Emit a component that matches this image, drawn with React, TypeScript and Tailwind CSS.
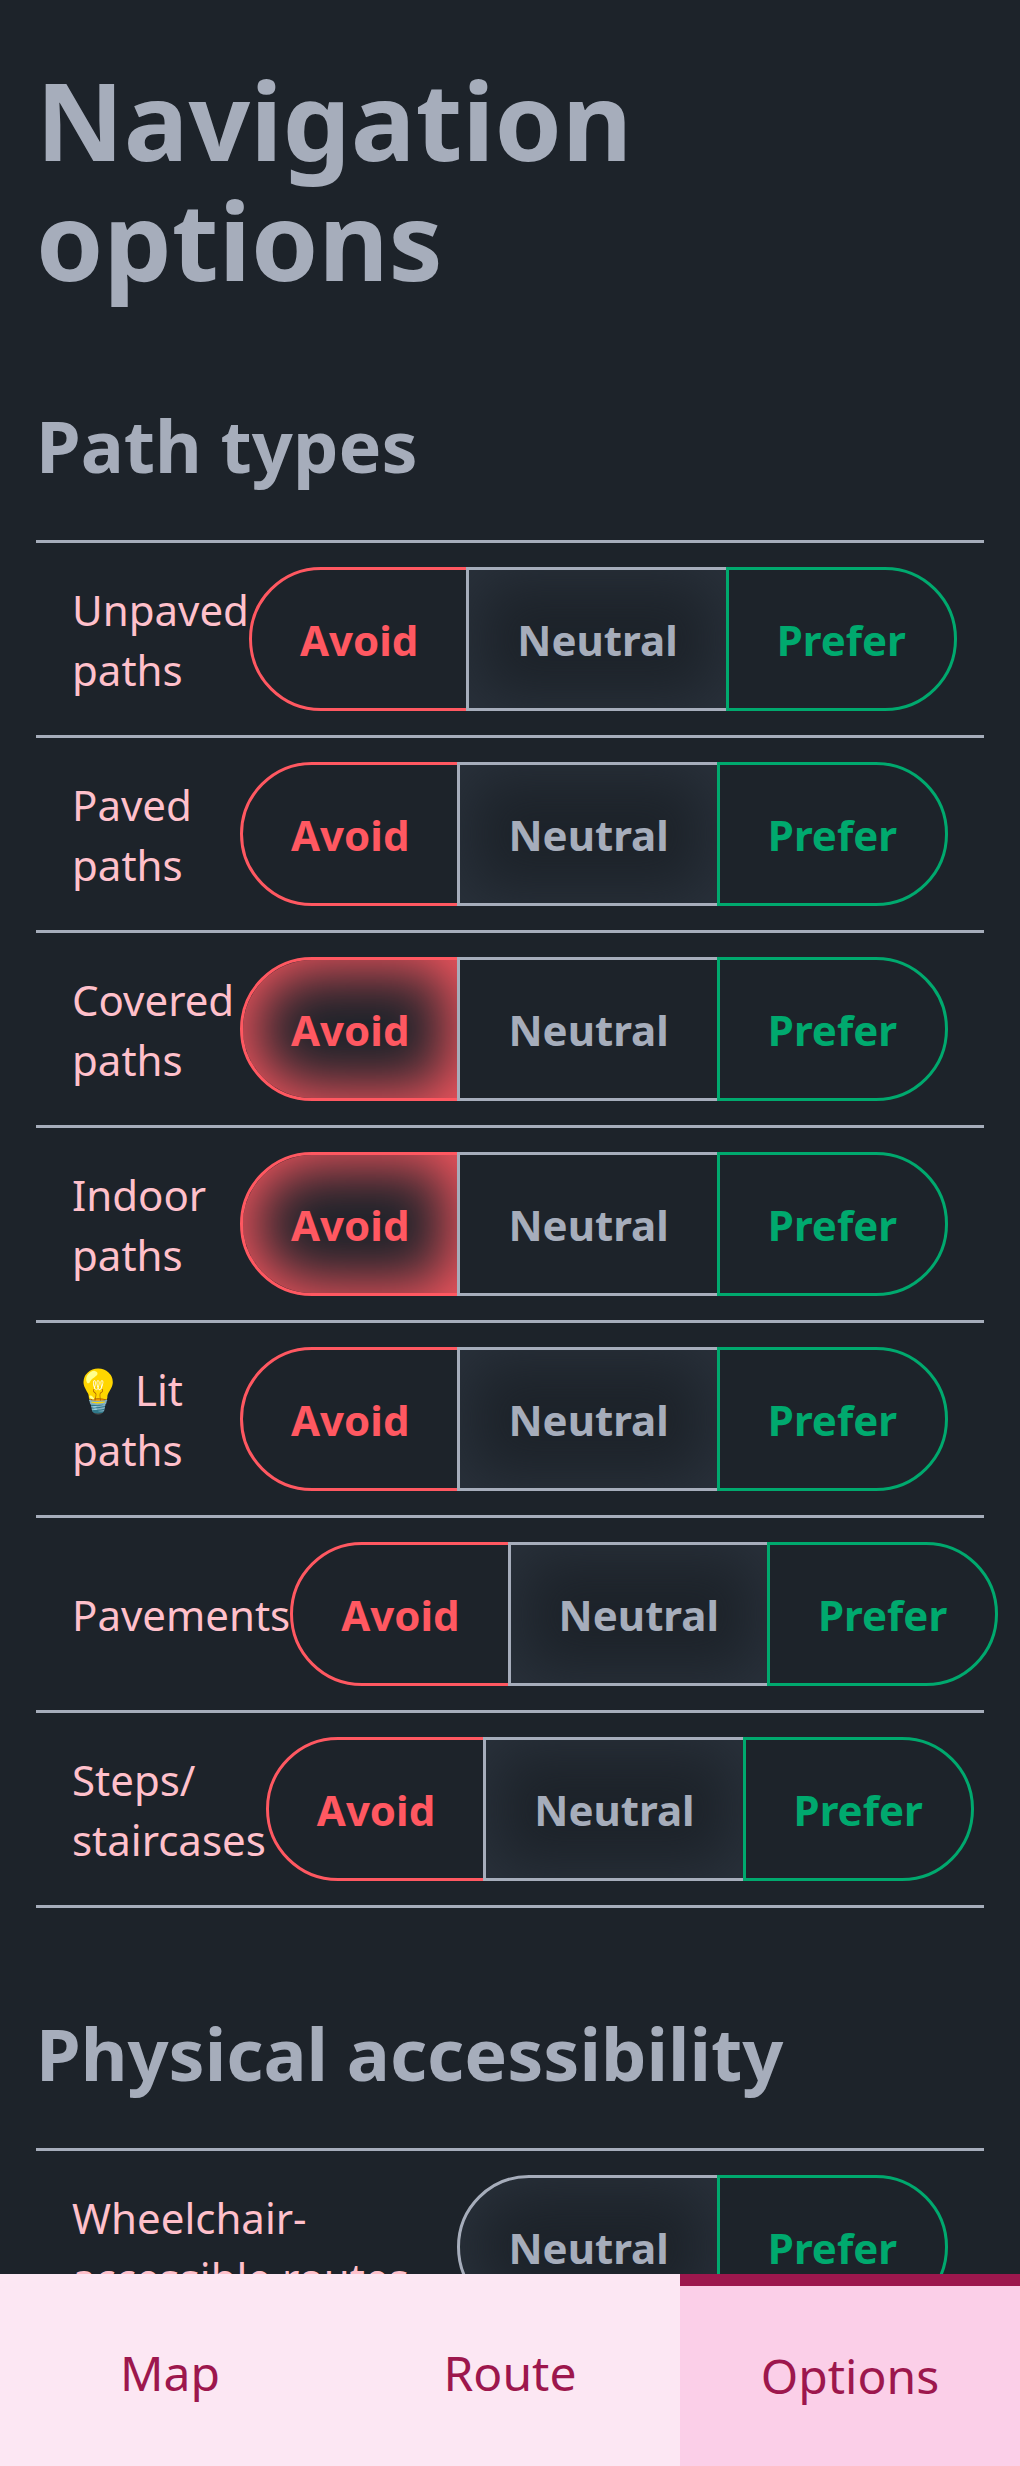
type Choice = 'avoid' | 'neutral' | 'prefer';

interface Option {
  label: string;
  selected: Choice;
  choices: Choice[];
}

const all: Choice[] = ['avoid', 'neutral', 'prefer'];

const pathTypes: Option[] = [
  { label: 'Unpaved paths', selected: 'neutral', choices: all },
  { label: 'Paved paths', selected: 'neutral', choices: all },
  { label: 'Covered paths', selected: 'avoid', choices: all },
  { label: 'Indoor paths', selected: 'avoid', choices: all },
  { label: '💡 Lit paths', selected: 'neutral', choices: all },
  { label: 'Pavements', selected: 'neutral', choices: all },
  { label: 'Steps/\u200bstaircases', selected: 'neutral', choices: all },
];

const accessibility: Option[] = [
  { label: 'Wheelchair-accessible routes', selected: 'neutral', choices: ['neutral', 'prefer'] },
];

const names: Record<Choice, string> = { avoid: 'Avoid', neutral: 'Neutral', prefer: 'Prefer' };

const colours: Record<Choice, string> = {
  avoid: 'border-[#ff5861] text-[#ff5861]',
  neutral: 'border-[#a6adbb] text-[#a6adbb]',
  prefer: 'border-[#00a96e] text-[#00a96e]',
};

const glows: Record<Choice, string> = {
  avoid: 'shadow-[inset_0_0_60px_9px_#ff5861]',
  neutral: 'shadow-[inset_0_0_60px_9px_#2a323c]',
  prefer: 'shadow-[inset_0_0_60px_9px_#00a96e]',
};

function OptionRow({ option }: { option: Option }) {
  return (
    <li className="flex items-center justify-between border-b-3 border-[#a6adbb] px-9 py-6">
      <span className="pt-0.5 text-[42px] leading-[60px] text-[#ffc0cb]">{option.label}</span>
      <div className="flex shrink-0">
        {option.choices.map((choice) => (
          <button
            key={choice}
            className={`-ml-[3px] h-36 border-3 px-12 pt-0.5 text-[42px] leading-[42px] font-bold first:ml-0 first:rounded-l-[72px] last:rounded-r-[72px] ${colours[choice]} ${option.selected === choice ? glows[choice] : ''}`}
          >
            {names[choice]}
          </button>
        ))}
      </div>
    </li>
  );
}

function Section({ title, options }: { title: string; options: Option[] }) {
  return (
    <section>
      <h2 className="pt-px pb-[47px] text-[72px] leading-[96px] font-bold">{title}</h2>
      <ul className="border-t-3 border-[#a6adbb]">
        {options.map((option) => (
          <OptionRow key={option.label} option={option} />
        ))}
      </ul>
    </section>
  );
}

export default function App() {
  return (
    <div className="flex h-[2466px] w-[1020px] flex-col overflow-hidden bg-[#1d232a] font-['Noto_Sans',sans-serif] text-[#a6adbb]">
      <main className="min-h-0 flex-1 overflow-hidden px-9 pt-[60px]">
        <h1 className="w-[900px] pb-24 text-[108px] leading-[120px] font-bold">Navigation options</h1>
        <div className="flex flex-col gap-24">
          <Section title="Path types" options={pathTypes} />
          <Section title="Physical accessibility" options={accessibility} />
        </div>
      </main>
      <nav className="grid h-48 shrink-0 grid-cols-3 bg-[#fce7f3] text-[48px] leading-[48px] text-[#9d174d]">
        <button className="pt-1.5">Map</button>
        <button className="pt-1.5">Route</button>
        <button className="border-t-12 border-[#9d174d] bg-[#fbcfe8]">Options</button>
      </nav>
    </div>
  );
}
